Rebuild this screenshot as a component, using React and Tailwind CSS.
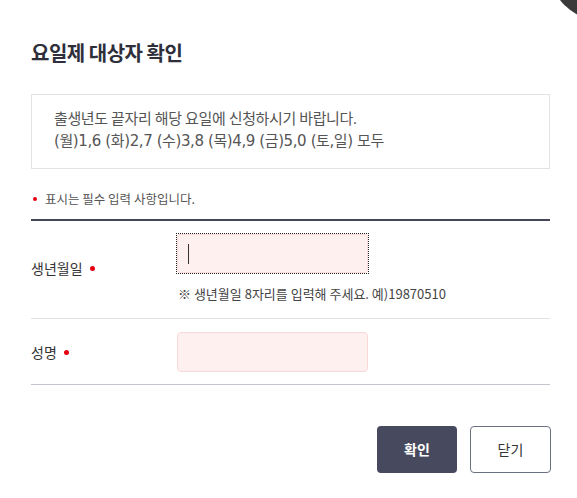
export default function App() {
  return (
    <div className="relative w-[577px] h-[498px] overflow-hidden bg-white font-['Noto_Sans_CJK_KR',sans-serif] text-[#333]">
      <div className="absolute left-[550px] top-[-80px] w-[100px] h-[100px] rounded-full bg-[#3a3a3a]" />
      <div className="pl-[31px] pr-[27px] pt-[39px]">
        <h1 className="text-[20px] leading-[28px] font-bold text-[#2e2f3a] tracking-[-0.5px]">요일제 대상자 확인</h1>
        <div className="mt-[27px] border border-[#e3e3e3] pt-[12px] pb-[15px] px-[22px] text-[15px] leading-[23px] text-[#555] tracking-[-0.4px]">
          <p className="font-['Open_Sans','Noto_Sans_CJK_KR',sans-serif]">출생년도 끝자리 해당 요일에 신청하시기 바랍니다.</p>
          <p className="font-['DejaVu_Sans','Noto_Sans_CJK_KR',sans-serif]">(월)1,6 (화)2,7 (수)3,8 (목)4,9 (금)5,0 (토,일) 모두</p>
        </div>
        <div className="mt-[21px] flex items-center gap-[8px] text-[12.5px] leading-[18px] text-[#555]">
          <span className="w-[4px] h-[4px] rounded-full bg-[#e60012] ml-[2px]" />
          <span>표시는 필수 입력 사항입니다.</span>
        </div>
        <div className="mt-[11px] h-[2px] bg-[#454758]" />
        <div className="flex items-center border-b border-[#e2e2e2] pt-[12px] pb-[15px]">
          <div className="w-[145px] flex items-center gap-[7px] text-[14px] leading-[20px]">
            <span>생년월일</span>
            <span className="w-[5px] h-[5px] rounded-full bg-[#e60012]" />
          </div>
          <div className="flex flex-col">
            <div className="w-[193px] h-[41px] border border-dotted border-[#222]">
              <div className="w-full h-full rounded-[3px] border border-[#fbdcdc] bg-[#fff0f0] flex items-center pl-[10px]">
                <span className="w-[1px] h-[20px] bg-[#333]" />
              </div>
            </div>
            <p className="mt-[11px] ml-[2px] text-[13px] leading-[18px] text-[#444]">※ 생년월일 8자리를 입력해 주세요. 예)19870510</p>
          </div>
        </div>
        <div className="flex items-center border-b border-[#c4c4cc] pt-[13px] pb-[12px]">
          <div className="w-[146px] flex items-center gap-[7px] text-[14px] leading-[20px]">
            <span>성명</span>
            <span className="w-[5px] h-[5px] rounded-full bg-[#e60012]" />
          </div>
          <div className="w-[191px] h-[40px] rounded-[4px] border border-[#fbd8d8] bg-[#fff0f0]" />
        </div>
        <div className="mt-[41px] flex justify-end gap-[13px] mr-[-1px]">
          <button className="w-[80px] h-[47px] rounded-[4px] bg-[#474a5e] text-white text-[14px] font-bold">확인</button>
          <button className="w-[81px] h-[47px] rounded-[4px] border border-[#6b7080] bg-white text-[#333] text-[14px]">닫기</button>
        </div>
      </div>
    </div>
  );
}
